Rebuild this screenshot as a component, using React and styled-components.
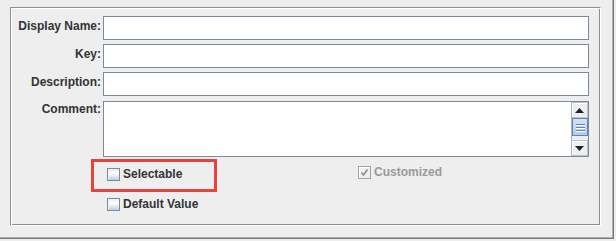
import React from "react";
import styled, { createGlobalStyle } from "styled-components";

const Global = createGlobalStyle`
  html, body { margin: 0; padding: 0; background: #eeeeee; }
  body { font-family: "Liberation Sans", Arial, sans-serif; }
  * { box-sizing: border-box; }
`;

const Page = styled.div`
  width: 616px;
  height: 241px;
  overflow: hidden;
  background: #eeeeee;
`;

const Outer = styled.div`
  width: 614px;
  height: 239px;
  padding: 7px 12px 12px 10px;
  border-right: 1px solid #767676;
  border-bottom: 1px solid #767676;
  box-shadow: inset -1px -1px 0 #b0b0b0;
`;

const Etched = styled.div`
  width: 591px;
  height: 219px;
  border: 1px solid;
  border-color: #8e8e8e #ffffff #ffffff #8e8e8e;
  box-shadow: inset 1px 1px 0 #ffffff, inset -1px -1px 0 #8e8e8e;
  padding: 8px 0 0 1px;
`;

const Form = styled.div`
  display: grid;
  grid-template-columns: 89px 486px;
  column-gap: 2px;
  row-gap: 4px;
`;

const Label = styled.div`
  font-weight: bold;
  font-size: 12px;
  line-height: 13px;
  color: #333333;
  text-align: right;
  white-space: nowrap;
  padding-top: ${(p) => p.$top}px;
`;

const Field = styled.div`
  height: 24px;
  background: #ffffff;
  border: 1px solid #7a8a99;
`;

const Area = styled.div`
  margin-top: 1px;
  height: 56px;
  background: #ffffff;
  border: 1px solid #7a8a99;
  display: flex;
  justify-content: flex-end;
`;

const ScrollBar = styled.div`
  width: 17px;
  height: 100%;
  display: flex;
  flex-direction: column;
  background: #eeeeee;
  border-left: 1px solid #a8b4c0;
`;

const ArrowButton = styled.div`
  height: 16px;
  display: flex;
  align-items: center;
  justify-content: center;
  background: #eeeeee;
  border: 1px solid #b8c2cc;
  border-left: none;
  box-shadow: inset 1px 1px 0 #ffffff;
`;

const Track = styled.div`
  flex: 1;
  display: flex;
  flex-direction: column;
  padding: 0 0 2px 0;
`;

const Thumb = styled.div`
  height: 18px;
  background: linear-gradient(#d4e3f2, #b2cbe6);
  border: 1px solid #6382bf;
  display: flex;
  flex-direction: column;
  align-items: center;
  justify-content: center;
  gap: 2px;
`;

const Grip = styled.div`
  width: 9px;
  height: 1px;
  background: #6382bf;
  box-shadow: 0 1px 0 #ffffff;
`;

const Checks = styled.div`
  grid-column: 2;
  display: grid;
  grid-template-columns: 251px 1fr;
  row-gap: 17px;
  padding-left: 4px;
  margin-top: 7px;
`;

const CheckItem = styled.div`
  position: relative;
  display: flex;
  align-items: center;
  gap: 3px;
  height: 13px;
  margin-top: ${(p) => p.$shift || 0}px;
  margin-bottom: ${(p) => -(p.$shift || 0)}px;
`;

const Box = styled.span`
  width: 13px;
  height: 13px;
  flex: none;
  border: 1px solid ${(p) => (p.$disabled ? "#98a6b4" : "#7a8a99")};
  background: ${(p) =>
    p.$disabled
      ? "#eeeeee"
      : "linear-gradient(#dde8f3 0%, #ffffff 35%, #ffffff 40%, #b8cfe5 100%)"};
  box-shadow: inset 1px 1px 0 ${(p) => (p.$disabled ? "#ffffff" : "#eef3f9")};
  display: flex;
  align-items: center;
  justify-content: center;
`;

const CheckText = styled.span`
  font-weight: bold;
  font-size: 12px;
  line-height: 13px;
  color: ${(p) => (p.$disabled ? "#999999" : "#333333")};
  white-space: nowrap;
`;

const Highlight = styled.div`
  position: absolute;
  left: -16px;
  top: -9px;
  width: 126px;
  height: 33px;
  border: 3px solid #e4433f;
  pointer-events: none;
`;

function Check({ label, checked, disabled, shift, highlighted }) {
  return (
    <CheckItem $shift={shift}>
      {highlighted && <Highlight />}
      <Box $disabled={disabled}>
        {checked && (
          <svg width="9" height="9" viewBox="0 0 9 9">
            <path d="M1.5 4.5 L3.5 7 L7.5 1.5" fill="none" stroke="#8a8a8a" strokeWidth="1.6" />
          </svg>
        )}
      </Box>
      <CheckText $disabled={disabled}>{label}</CheckText>
    </CheckItem>
  );
}

function Arrow({ up }) {
  return (
    <svg width="9" height="5" viewBox="0 0 9 5">
      <path d={up ? "M0 5 L4.5 0 L9 5 Z" : "M0 0 L4.5 5 L9 0 Z"} fill="#222222" />
    </svg>
  );
}

export default function App() {
  return (
    <Page>
      <Global />
      <Outer>
        <Etched>
          <Form>
            <Label $top={4}>Display Name:</Label>
            <Field />
            <Label $top={4}>Key:</Label>
            <Field />
            <Label $top={4}>Description:</Label>
            <Field />
            <Label $top={3}>Comment:</Label>
            <Area>
              <ScrollBar>
                <ArrowButton>
                  <Arrow up />
                </ArrowButton>
                <Track>
                  <Thumb>
                    <Grip />
                    <Grip />
                    <Grip />
                  </Thumb>
                </Track>
                <ArrowButton>
                  <Arrow />
                </ArrowButton>
              </ScrollBar>
            </Area>
            <Checks>
              <Check label="Selectable" highlighted />
              <Check label="Customized" checked disabled shift={-2} />
              <Check label="Default Value" />
            </Checks>
          </Form>
        </Etched>
      </Outer>
    </Page>
  );
}
